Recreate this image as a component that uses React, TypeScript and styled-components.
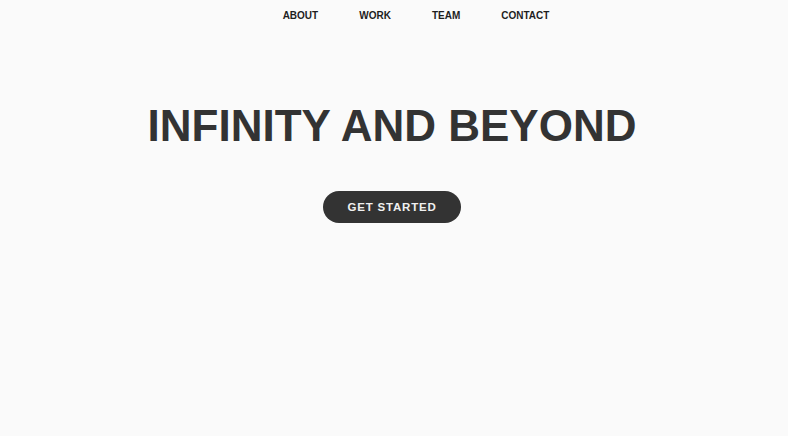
import React from "react";
import styled, { createGlobalStyle } from "styled-components";

const Global = createGlobalStyle`
  html, body { margin: 0; padding: 0; background: #fafafa; }
  body { font-family: "Liberation Sans", Arial, sans-serif; color: #333; }
`;

const Page = styled.div`
  width: 784px;
  height: 436px;
  background: #fafafa;
  display: flex;
  flex-direction: column;
  align-items: center;
`;

const Nav = styled.nav`
  display: flex;
  justify-content: center;
  gap: 41px;
  padding-top: 10px;
  padding-left: 48px;
`;

const NavLink = styled.a`
  font-size: 10px;
  font-weight: 700;
  color: #1e1e1e;
  text-decoration: none;
  line-height: 11px;
`;

const Heading = styled.h1`
  margin: 79px 0 0;
  font-size: 44px;
  font-weight: 700;
  color: #333;
  line-height: 52px;
`;

const Button = styled.button`
  margin-top: 39px;
  width: 138px;
  height: 32px;
  border: none;
  border-radius: 16px;
  background: #333;
  color: #f0f0f0;
  font-family: "Liberation Sans", Arial, sans-serif;
  font-size: 11.5px;
  letter-spacing: 0.8px;
  font-weight: 700;
`;

export default function App() {
  return (
    <>
      <Global />
      <Page>
        <Nav>
          {["ABOUT", "WORK", "TEAM", "CONTACT"].map((t) => (
            <NavLink key={t}>{t}</NavLink>
          ))}
        </Nav>
        <Heading>INFINITY AND BEYOND</Heading>
        <Button>GET STARTED</Button>
      </Page>
    </>
  );
}
